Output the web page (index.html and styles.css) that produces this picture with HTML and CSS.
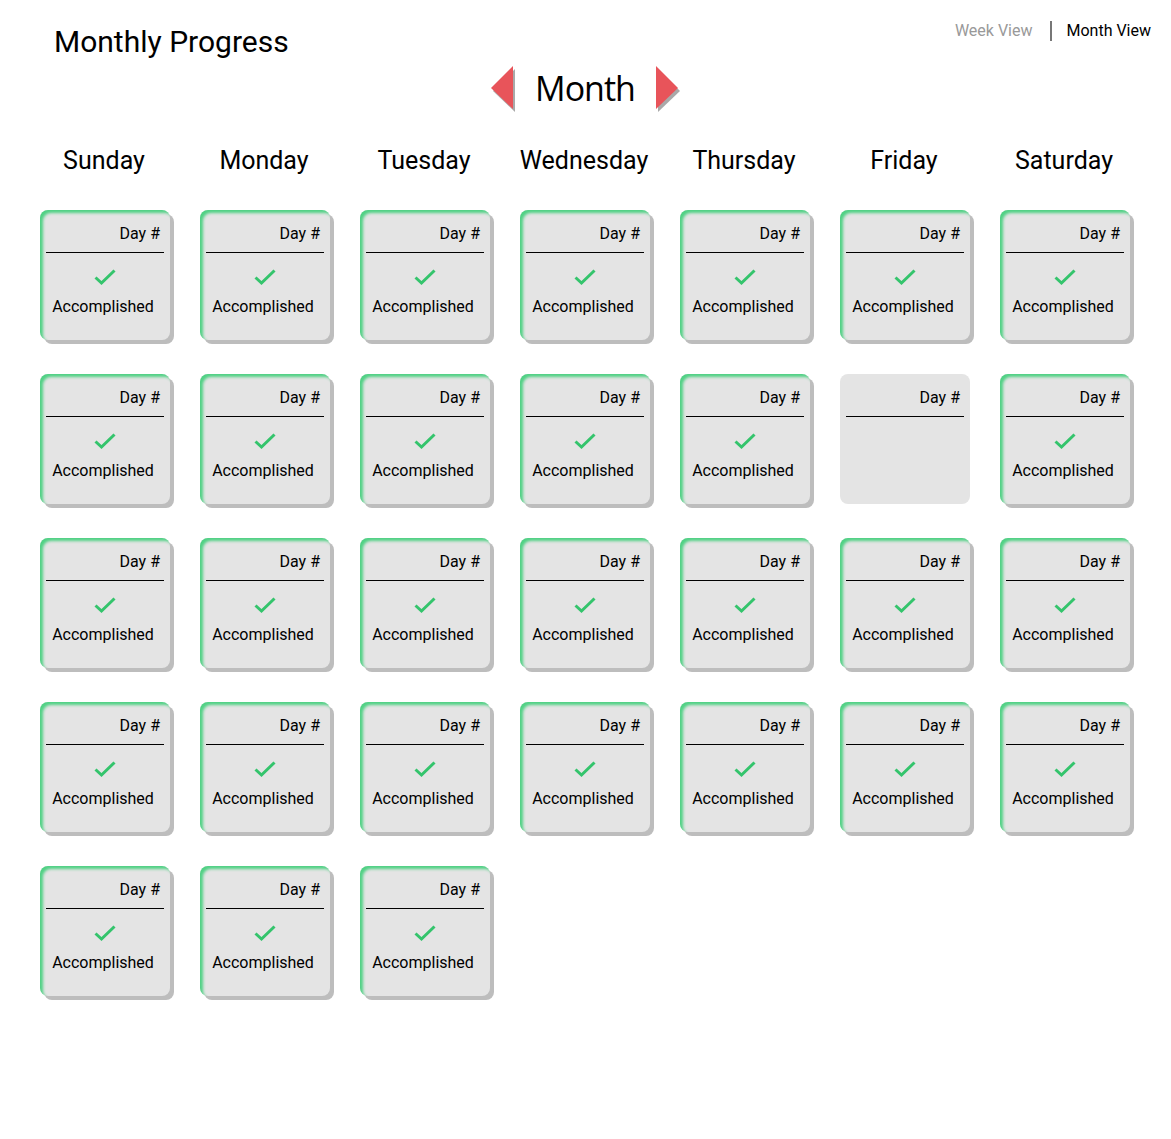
FILE: index.html
```html
<!DOCTYPE html>
<html lang="en">
<head>
  <meta charset="UTF-8" />
  <title>Monthly Progress</title>
  <meta name="viewport" content="width=device-width, initial-scale=1" />
  <link rel="stylesheet" href="styles.css">
</head>
<body>
  <svg class="defs" width="0" height="0">
    <symbol id="check" viewBox="0 0 24 18">
      <polyline points="2.5,9.5 8.5,15 21.5,2.5" fill="none" stroke="#34c46c" stroke-width="3" />
    </symbol>
  </svg>

  <div class="top">
    <h1 class="title">Monthly Progress</h1>
    <div class="views">
      <span class="view">Week View</span>
      <span class="sep"></span>
      <span class="view active">Month View</span>
    </div>
  </div>

  <div class="nav">
    <svg class="arrow" width="28" height="48" viewBox="0 0 28 48">
      <polygon points="26,5 26,48 4,27" fill="#a9a9a9" />
      <polygon points="24,2 24,45 2,24" fill="#e8545a" />
    </svg>
    <span class="month">Month</span>
    <svg class="arrow" width="28" height="48" viewBox="0 0 28 48">
      <polygon points="5,5 5,48 27,27" fill="#a9a9a9" />
      <polygon points="3,2 3,45 25,24" fill="#e8545a" />
    </svg>
  </div>

  <div class="calendar">
    <div class="dayname">Sunday</div>
    <div class="dayname">Monday</div>
    <div class="dayname">Tuesday</div>
    <div class="dayname">Wednesday</div>
    <div class="dayname">Thursday</div>
    <div class="dayname">Friday</div>
    <div class="dayname">Saturday</div>

    <!-- week 1 -->
    <div class="card done"><div class="num">Day #</div><svg class="check"><use href="#check" /></svg><div class="status">Accomplished</div></div>
    <div class="card done"><div class="num">Day #</div><svg class="check"><use href="#check" /></svg><div class="status">Accomplished</div></div>
    <div class="card done"><div class="num">Day #</div><svg class="check"><use href="#check" /></svg><div class="status">Accomplished</div></div>
    <div class="card done"><div class="num">Day #</div><svg class="check"><use href="#check" /></svg><div class="status">Accomplished</div></div>
    <div class="card done"><div class="num">Day #</div><svg class="check"><use href="#check" /></svg><div class="status">Accomplished</div></div>
    <div class="card done"><div class="num">Day #</div><svg class="check"><use href="#check" /></svg><div class="status">Accomplished</div></div>
    <div class="card done"><div class="num">Day #</div><svg class="check"><use href="#check" /></svg><div class="status">Accomplished</div></div>

    <!-- week 2 -->
    <div class="card done"><div class="num">Day #</div><svg class="check"><use href="#check" /></svg><div class="status">Accomplished</div></div>
    <div class="card done"><div class="num">Day #</div><svg class="check"><use href="#check" /></svg><div class="status">Accomplished</div></div>
    <div class="card done"><div class="num">Day #</div><svg class="check"><use href="#check" /></svg><div class="status">Accomplished</div></div>
    <div class="card done"><div class="num">Day #</div><svg class="check"><use href="#check" /></svg><div class="status">Accomplished</div></div>
    <div class="card done"><div class="num">Day #</div><svg class="check"><use href="#check" /></svg><div class="status">Accomplished</div></div>
    <div class="card"><div class="num">Day #</div></div>
    <div class="card done"><div class="num">Day #</div><svg class="check"><use href="#check" /></svg><div class="status">Accomplished</div></div>

    <!-- week 3 -->
    <div class="card done"><div class="num">Day #</div><svg class="check"><use href="#check" /></svg><div class="status">Accomplished</div></div>
    <div class="card done"><div class="num">Day #</div><svg class="check"><use href="#check" /></svg><div class="status">Accomplished</div></div>
    <div class="card done"><div class="num">Day #</div><svg class="check"><use href="#check" /></svg><div class="status">Accomplished</div></div>
    <div class="card done"><div class="num">Day #</div><svg class="check"><use href="#check" /></svg><div class="status">Accomplished</div></div>
    <div class="card done"><div class="num">Day #</div><svg class="check"><use href="#check" /></svg><div class="status">Accomplished</div></div>
    <div class="card done"><div class="num">Day #</div><svg class="check"><use href="#check" /></svg><div class="status">Accomplished</div></div>
    <div class="card done"><div class="num">Day #</div><svg class="check"><use href="#check" /></svg><div class="status">Accomplished</div></div>

    <!-- week 4 -->
    <div class="card done"><div class="num">Day #</div><svg class="check"><use href="#check" /></svg><div class="status">Accomplished</div></div>
    <div class="card done"><div class="num">Day #</div><svg class="check"><use href="#check" /></svg><div class="status">Accomplished</div></div>
    <div class="card done"><div class="num">Day #</div><svg class="check"><use href="#check" /></svg><div class="status">Accomplished</div></div>
    <div class="card done"><div class="num">Day #</div><svg class="check"><use href="#check" /></svg><div class="status">Accomplished</div></div>
    <div class="card done"><div class="num">Day #</div><svg class="check"><use href="#check" /></svg><div class="status">Accomplished</div></div>
    <div class="card done"><div class="num">Day #</div><svg class="check"><use href="#check" /></svg><div class="status">Accomplished</div></div>
    <div class="card done"><div class="num">Day #</div><svg class="check"><use href="#check" /></svg><div class="status">Accomplished</div></div>

    <!-- week 5 -->
    <div class="card done"><div class="num">Day #</div><svg class="check"><use href="#check" /></svg><div class="status">Accomplished</div></div>
    <div class="card done"><div class="num">Day #</div><svg class="check"><use href="#check" /></svg><div class="status">Accomplished</div></div>
    <div class="card done"><div class="num">Day #</div><svg class="check"><use href="#check" /></svg><div class="status">Accomplished</div></div>
  </div>
</body>
</html>
```

FILE: styles.css
```css
body {
  font-family: Roboto, "Liberation Sans", sans-serif;
  background: #fff;
  color: #000;
  margin: 0;
  padding: 0;
  min-height: 1139px;
}

.defs {
  position: absolute;
  width: 0;
  height: 0;
}

.top {
  display: flex;
  justify-content: space-between;
  align-items: flex-start;
  height: 63px;
}

.title {
  margin: 24px 0 0 54px;
  font-size: 30px;
  line-height: 36px;
  font-weight: 400;
}

.views {
  display: flex;
  align-items: center;
  margin-top: 21px;
  padding-right: 20px;
  font-size: 16px;
  line-height: 20px;
}

.view {
  color: #999;
}

.view.active {
  color: #000;
}

.sep {
  width: 2px;
  height: 20px;
  background: #777;
  margin: 0 14px 0 18px;
}

.nav {
  display: flex;
  justify-content: center;
  align-items: center;
  gap: 18px;
  height: 50px;
  padding-right: 1px;
}

.month {
  font-family: "Open Sans", sans-serif;
  font-size: 34px;
  line-height: 44px;
  letter-spacing: -1px;
}

.calendar {
  display: grid;
  grid-template-columns: repeat(7, 130px);
  column-gap: 30px;
  row-gap: 34px;
  padding: 0 0 60px 40px;
}

.dayname {
  text-align: center;
  font-size: 25px;
  line-height: 30px;
  margin: 33px -15px 0 -17px;
}

.card {
  height: 130px;
  background: #e4e4e4;
  border-radius: 8px;
  display: flex;
  flex-direction: column;
  align-items: center;
}

.card.done {
  box-shadow: inset 3px 3px 3px #4fd184, 4px 4px 0 #bdbdbd;
}

.num {
  align-self: stretch;
  text-align: right;
  font-size: 16px;
  line-height: 20px;
  padding: 14px 4px 8px 0;
  margin: 0 6px;
  border-bottom: 1px solid #000;
}

.check {
  width: 24px;
  height: 18px;
  margin-top: 15px;
}

.status {
  font-size: 16px;
  line-height: 20px;
  margin-top: 11px;
  padding-right: 4px;
}
```
